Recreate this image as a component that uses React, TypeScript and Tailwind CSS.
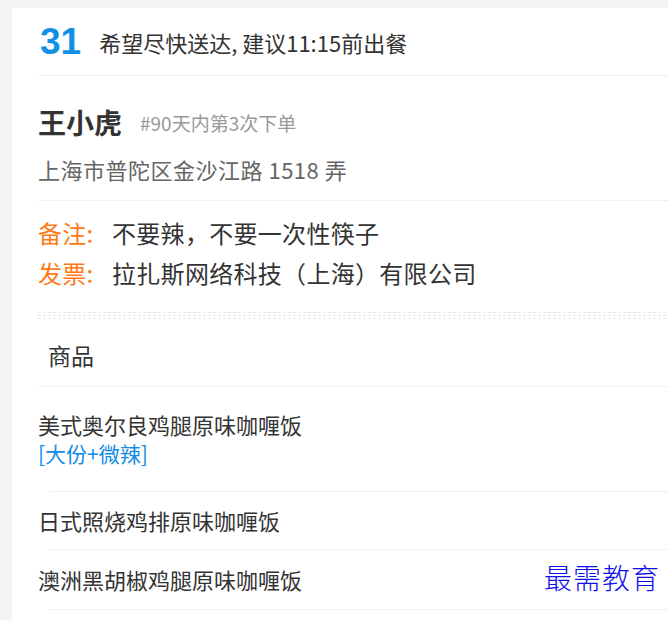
const items = [
  { name: '美式奥尔良鸡腿原味咖喱饭', spec: '[大份+微辣]' },
  { name: '日式照烧鸡排原味咖喱饭' },
  { name: '澳洲黑胡椒鸡腿原味咖喱饭' },
]

function Dotted() {
  return (
    <div className="flex flex-col gap-[2px]">
      <div className="h-px bg-[repeating-linear-gradient(90deg,#e6e6e6_0_3px,transparent_3px_5px)]" />
      <div className="h-px bg-[repeating-linear-gradient(90deg,#e6e6e6_0_3px,transparent_3px_5px)]" />
      <div className="h-px bg-[repeating-linear-gradient(90deg,#e6e6e6_0_3px,transparent_3px_5px)]" />
    </div>
  )
}

export default function App() {
  return (
    <div
      className="min-h-[620px] w-[668px] overflow-hidden bg-[#f4f4f4] pt-[8px] pl-[12px] text-[#333]"
      style={{ fontFamily: '"Noto Sans CJK SC", "Noto Sans", sans-serif' }}
    >
      <div className="bg-white pl-[26px] pb-[20px]">
        {/* header */}
        <div className="flex h-[68px] items-center border-b border-[#f0f0f0]">
          <span className="ml-[2px] font-['Liberation_Sans',sans-serif] text-[37px] font-bold leading-none text-[#1190e6]">
            31
          </span>
          <span className="ml-[18px] text-[22px] leading-none text-[#333]">希望尽快送达, 建议11:15前出餐</span>
        </div>

        {/* customer */}
        <div className="border-b border-[#f0f0f0] pt-[29px] pb-[16px]">
          <div className="flex h-[34px] items-center">
            <span className="text-[28px] font-bold leading-none text-[#333]">王小虎</span>
            <span className="ml-[18px] text-[19px] leading-none text-[#999]">#90天内第3次下单</span>
          </div>
          <div className="mt-[15px] flex h-[30px] items-center text-[22px] leading-none tracking-[0.5px] text-[#666]">
            上海市普陀区金沙江路 1518 弄
          </div>
        </div>

        {/* remarks */}
        <div className="pt-[12px] pb-[19px] text-[24px] tracking-[0.3px]">
          <div className="flex h-[40px] items-center">
            <span className="w-[74px] text-[#ff7a17]">备注:</span>
            <span>不要辣，不要一次性筷子</span>
          </div>
          <div className="flex h-[40px] items-center">
            <span className="w-[74px] text-[#ff7a17]">发票:</span>
            <span>拉扎斯网络科技（上海）有限公司</span>
          </div>
        </div>

        <Dotted />

        {/* goods */}
        <div className="flex h-[68px] items-center border-b border-[#f0f0f0] pt-[6px] pl-[10px] text-[23px]">
          商品
        </div>

        {items.map((it, i) => (
          <div key={i}>
            {it.spec ? (
              <div className="pt-[23px] pb-[23px] text-[22px] leading-[29px]">
                <div>{it.name}</div>
                <div className="text-[21px] text-[#0f8ce8]">{it.spec}</div>
              </div>
            ) : (
              <div className={`relative flex items-center text-[22px] ${i === 1 ? 'h-[57px]' : 'h-[59px]'}`}>
                {it.name}
                {i === 2 && (
                  <span className="absolute right-[8px] top-[16px] font-['Liberation_Serif','Noto_Sans_CJK_SC',serif] text-[28px] font-light leading-none tracking-[1px] text-[#1010e8]">
                    最需教育
                  </span>
                )}
              </div>
            )}
            <div className="ml-[12px] h-px bg-[#f0f0f0]" />
          </div>
        ))}
      </div>
    </div>
  )
}
